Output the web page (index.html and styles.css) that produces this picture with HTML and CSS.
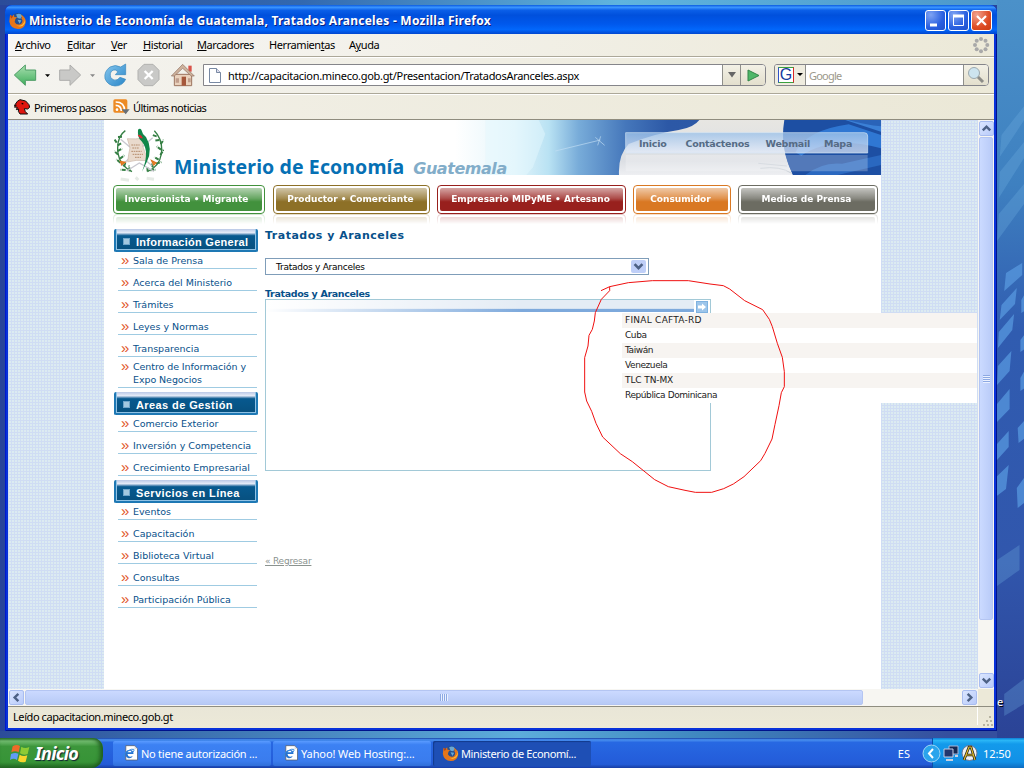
FILE: index.html
```html
<!DOCTYPE html>
<html lang="es">
<head>
<meta charset="utf-8">
<title>Ministerio de Economía de Guatemala, Tratados Aranceles</title>
<link rel="stylesheet" href="styles.css">
</head>
<body>
<svg class="defs" width="0" height="0">
  <defs>
    <linearGradient id="green" x1="0" y1="0" x2="0" y2="1"><stop offset="0" stop-color="#a9dfb0"/><stop offset="1" stop-color="#3fae5c"/></linearGradient>
    <linearGradient id="sky" x1="0" y1="0" x2="1" y2="1"><stop offset="0" stop-color="#86c7ee"/><stop offset="1" stop-color="#2a86c8"/></linearGradient>
    <symbol id="fox" viewBox="0 0 48 48"><circle cx="25" cy="22" r="19" fill="#244f91"/><path d="M20 7q12-6 18 4l-6 8-8-2zM24 22l11 1-5 10z" fill="#68a8d4"/><path d="M3 8l6 4 5-5 1 7 8 1-5 5-2 8q4 8 13 7 9-1 9-12l-4-7 3 1-3-9q15 8 13 22-4 18-22 18Q4 47 1 27z" fill="#e5761b"/><path d="M39 9q12 15-1 26-10 7-20 2 17 10 26-4 5-12-5-24z" fill="#ffc43b"/><path d="M3 9l3 9 6-5z" fill="#b94413"/></symbol>
    <symbol id="ie" viewBox="0 0 48 48"><path d="M10 2h26l9 9v34H10z" fill="#fff" stroke="#555" stroke-width="2"/><path d="M36 2v10h9" fill="#ddd"/><path d="M33 27H15q1 9 9 8l7-2q-4 8-13 7-10-3-9-15 2-11 14-11 10 1 10 13zm-18-5h12q-1-6-6-5-5 0-6 5z" fill="#2473d2"/><path d="M3 37q-5-7 11-18Q29 10 34 13q2 3-3 9" fill="none" stroke="#348ae0" stroke-width="3"/></symbol>
    <symbol id="chev" viewBox="0 0 14 14"><path d="M3 9l4-4 4 4" fill="none" stroke="#4d6185" stroke-width="2.6"/></symbol>
  </defs>
</svg>
<div class="desktop">
  <svg class="wallpaper" viewBox="0 0 30 738" width="30" height="738" preserveAspectRatio="none">
    <g fill="#5a9ce2" opacity=".7">
      <path d="M10 273l18-10v12l-20 16zM5 305l17-17-2 16-17 16zM2 332l17-18-2 16-16 18zM1 366l15-15-2 20-14 14zM0 404l14-15v20l-15 14zM-1 445l14-14v16l-14 14zM-2 478l15-13-3 24-12 8z"/>
      <path d="M27 300l5-8v18l-5 3zM26 340l5-6v15l-5 3zM26 378l5-8v18l-5 3zM23 428l8-8v18l-7 5zM22 488l8-10v25l-7 5z"/>
    </g>
    <g fill="#6fb0e0" opacity=".3"><path d="M5 135l26-30v14L3 157zM3 172l27-30v16L2 198zM2 214l28-30v20L0 241zM0 560l25-15v25L0 586zM8 694l22-15v25l-22 12z"/></g>
  </svg>
  <span class="desk-letter">e</span>
  <div class="window">
    <div class="titlebar">
      <svg width="17" height="17"><use href="#fox"/></svg>
      <span class="title t-title">Ministerio de Economía de Guatemala, Tratados Aranceles - Mozilla Firefox</span>
      <span class="wbtn"><svg width="19" height="19"><path d="M4 14h7" stroke="#fff" stroke-width="3"/></svg></span>
      <span class="wbtn"><svg width="19" height="19"><path d="M4.500 5.500h10v9h-10z" fill="none" stroke="#fff"/><path d="M4 5h11" stroke="#fff" stroke-width="3"/></svg></span>
      <span class="wbtn close"><svg width="19" height="19"><path d="M5 5l9 9M14 5l-9 9" stroke="#fff" stroke-width="2.200"/></svg></span>
    </div>
    <div class="menubar">
      <span><u>A</u>rchivo</span><span><u>E</u>ditar</span><span><u>V</u>er</span><span><u>H</u>istorial</span><span><u>M</u>arcadores</span><span>Herramien<u>t</u>as</span><span>A<u>y</u>uda</span>
      <svg class="throbber" width="18" height="18"><g fill="#a9a9a9"><circle cx="9" cy="3" r="2"/><circle cx="13.500" cy="4.700" r="2"/><circle cx="15.300" cy="9" r="2"/><circle cx="13.500" cy="13.300" r="2"/><circle cx="9" cy="15.300" r="2"/><circle cx="4.700" cy="13.300" r="2"/><circle cx="3" cy="9" r="2"/><circle cx="4.700" cy="4.700" r="2"/></g></svg>
    </div>
    <div class="navbar">
      <svg width="195" height="28" viewBox="0 0 585 84">
        <path d="M19 42l33-30v15h31v31H52v15z" fill="url(#green)" stroke="#4e9d67" stroke-width="3"/>
        <path d="M111 40h15l-7 8z"/><path d="M155 27h31V12l32 30-32 31V58h-31z" fill="#c9c9c7" stroke="#adadab" stroke-width="3"/><path d="M246 40h15l-7 8z" fill="#888"/>
        <path d="M338 18q-16-9-32 0-19 14-15 35 8 20 30 22 23 0 32-20l-17-6q-8 11-18 8-13-5-11-19 3-12 15-11l8 5-8 9h31V9z" fill="url(#sky)" stroke="#3686bd" stroke-width="2"/>
        <path d="M408 10h27l18 18v28l-18 18h-27l-18-18V28z" fill="#c9c9c7" stroke="#b1b1af" stroke-width="3"/><path d="M410 30l24 24m0-24l-24 24" stroke="#fff" stroke-width="7"/>
        <path d="M541 14h10v18h-10z" fill="#d9534a"/><path d="M499 40h52v34h-52z" fill="#ead2bd" stroke="#9c745e" stroke-width="3"/><path d="M490 45l34-35 35 35h-9l-26-23-25 23z" fill="#ceb29c" stroke="#8f6f60" stroke-width="2"/><path d="M521 47h13v27h-13z" fill="#a5573b"/><path d="M503 52h10v13h-10zM540 52h8v12h-8z" fill="#c19e8c"/>
      </svg>
      <div class="url">
        <svg width="12" height="15"><path d="M.500.500h7l4 4v10H.500z" fill="#fff" stroke="#7889a3"/><path d="M7.500.500v4h4" fill="#dde" stroke="#7889a3"/></svg>
        <span class="grow t-url">http://capacitacion.mineco.gob.gt/Presentacion/TratadosAranceles.aspx</span>
        <span class="cell drop"><svg width="8" height="6"><path d="M0 0h8L4 5.500z" fill="#666"/></svg></span>
        <span class="cell go"><svg width="13" height="13"><path d="M1 1l11 5.500L1 12z" fill="#4fb768" stroke="#338548"/></svg></span>
      </div>
      <div class="search">
        <span class="engine"><i>G</i><svg width="6" height="4"><path d="M0 0h6L3 3z"/></svg></span>
        <span class="query">Google</span>
        <span class="cell mag"><svg width="18" height="18"><path d="M10 10l6 6" stroke="#8d8d88" stroke-width="3"/><circle cx="7" cy="7" r="5.500" fill="#cde4ef" stroke="#9ca9ae"/></svg></span>
      </div>
    </div>
    <div class="bookmarks">
      <svg width="16" height="16" viewBox="0 0 48 48"><path d="M1 20L10 7l8-5 17 4 10 11 2 8-6 5-10-1 3 9 7 7H18l-5-8 1-7-7 2 3-7-9-1 6-5z" fill="#e0160f" stroke="#111" stroke-width="3"/><path d="M23 13l5 2" stroke="#000" stroke-width="4"/></svg>
      <span class="bm1">Primeros pasos</span>
      <svg width="17" height="16" viewBox="0 0 51 48"><rect x="1" y="1" width="42" height="40" rx="5" fill="#ed8b24"/><circle cx="12" cy="32" r="4" fill="#fff"/><path d="M8 19q16 0 17 17M8 9q27 0 27 27" fill="none" stroke="#fff" stroke-width="5"/><path d="M26 31h24L38 46z" fill="#687078"/></svg>
      <span class="bm2">Últimas noticias</span>
    </div>
    <div class="view">
      <div class="page">
        <div class="site">
          <div class="brand">
            <svg class="emblem" viewBox="42 18 150 174" width="50" height="58">
              <g fill="none" stroke="#357f44" stroke-width="4"><path d="M76 35q-28 20-22 68 6 37 42 55M163 35q27 28 21 70-6 38-42 53"/><path d="M54 54l14-1M53 79l12-7M50 71l-6-9M53 96l14-7M54 107l-11-11M60 119l13-10M61 131L49 121M72 143l5-15M77 153l-16-1M89 157l-2-17M170 52l-13-4M178 63l-13 2M182 76l9-14M183 92l-13-10M181 108l10-16M176 122l-13-8M168 134l16-5M159 145l-6-12M151 154l16-2M143 157l-1-13" stroke-dasharray="12 3" stroke-width="6"/></g>
              <path d="M62 61l94 79M63 140l95-84M80 156l38-24 44 25" fill="none" stroke="#c8c7cf" stroke-width="4"/>
              <path d="M82 59q26 2 48-2l-2 24q12 30 12 44-34-4-57 4 2-22 7-43z" fill="#e9dacd" stroke="#ccb7a9" stroke-width="2"/>
              <path d="M94 78h25M97 87h21M94 97h31M98 106h31M105 115h18" stroke="#b58c6c" stroke-width="3" stroke-dasharray="5 2"/>
              <path d="M114 32q6-6 10 0 2 12 14 22 22 36 2 76l-14 28q14-36 12-60-3-22-16-34-10-10-8-32z" fill="#11864a"/><path d="M113 47q5 12 16 11l-6-9z" fill="#df2730"/><path d="M61 127l14 3-10 7zM155 125l13 7-7 6z" fill="#f49330" stroke="#dd7520" stroke-width="4"/>
              <path d="M62 180l25 4m20-9l8 8m25-5l22 3" stroke="#e6ebe6" stroke-width="9"/>
            </svg>
            <div class="name"><span class="min">Ministerio de Economía</span><span class="guate">Guatemala</span></div>
            <svg class="banner" viewBox="-171 15 1278 165" width="426" height="55" preserveAspectRatio="none">
              <defs><linearGradient id="ban"><stop offset="0" stop-color="#fff"/><stop offset=".14" stop-color="#e4f5fb"/><stop offset=".22" stop-color="#b9e2f3"/><stop offset=".29" stop-color="#78acd9"/><stop offset=".4" stop-color="#4577bb"/><stop offset=".5" stop-color="#2c58a6"/><stop offset="1" stop-color="#2d5cab"/></linearGradient><linearGradient id="fab" x1="0" y1="0" x2="0" y2="1"><stop offset="0" stop-color="#e7e6e2"/><stop offset=".75" stop-color="#dcdfe4"/><stop offset="1" stop-color="#eeeff2"/></linearGradient><linearGradient id="pan" x1="0" y1="0" x2="0" y2="1"><stop offset="0" stop-color="#9bc1e9" stop-opacity=".8"/><stop offset="1" stop-color="#e5ecfa" stop-opacity=".72"/></linearGradient></defs>
              <path d="M-171 15h1278v165H-171z" fill="url(#ban)"/>
              <path d="M-80 180V15H80l20 42-37 100-20 23z" fill="#e4f7fd" opacity=".5"/>
              <path d="M562 15H820Q800 94 843 180H321Q318 120 350 87 430 55 500 45 545 38 562 15z" fill="url(#fab)"/>
              <path d="M817 15H1107V180H843Q803 97 817 15z" fill="#1d4fa3"/>
              <path d="M850 112Q885 45 1010 28L1107 60V100Q960 60 868 122z" fill="#2f77d3"/>
              <path d="M905 15H1000L1107 50V15z" fill="#3b80d6"/><path d="M1008 15h99v19q-45-4-99-19z" fill="#2a63b8"/>
              <path d="M880 180q50-40 110-34l117-26v30l-130 30z" fill="#2a68c0"/>
              <path d="M745 160q60-8 94 15m-100-30l86 8" fill="none" stroke="#cbd1d8" stroke-width="3"/>
              <path d="M341 53h716q10 0 10 10v51H341z" fill="url(#pan)" stroke="#d1e4f5" stroke-width="2"/><path d="M341 120h726v49H341z" fill="#fff" opacity=".24"/>
              <path d="M130 108l135-33m-15-8l28 24m-12-27l-9 27" fill="none" stroke="#c3def5" stroke-width="3" opacity=".65"/>
            </svg>
            <nav class="topnav"><span>Inicio</span><span>Contáctenos</span><span>Webmail</span><span>Mapa</span></nav>
          </div>
          <div class="tabs">
            <div class="tab g"><b>Inversionista • Migrante</b></div><div class="tab o"><b>Productor • Comerciante</b></div><div class="tab r"><b>Empresario MIPyME • Artesano</b></div><div class="tab n"><b>Consumidor</b></div><div class="tab y"><b>Medios de Prensa</b></div>
          </div>
          <div class="cols">
            <aside class="side">
              <h2><i></i><span class="s1">Información General</span></h2>
              <p class="first">Sala de Prensa</p><p>Acerca del Ministerio</p><p>Trámites</p><p>Leyes y Normas</p><p>Transparencia</p><p class="two">Centro de Información y<br>Expo Negocios</p>
              <h2><i></i><span class="s2">Areas de Gestión</span></h2>
              <p class="first">Comercio Exterior</p><p>Inversión y Competencia</p><p>Crecimiento Empresarial</p>
              <h2><i></i><span class="s3">Servicios en Línea</span></h2>
              <p class="first">Eventos</p><p>Capacitación</p><p>Biblioteca Virtual</p><p>Consultas</p><p>Participación Pública</p>
            </aside>
            <main class="main">
              <h1>Tratados y Aranceles</h1>
              <div class="select"><span>Tratados y Aranceles</span><i><svg width="13" height="11" viewBox="0 0 14 14"><path d="M2 4l5 5 5-5" fill="none" stroke="#4d6185" stroke-width="3.400"/></svg></i></div>
              <h3>Tratados y Aranceles</h3>
              <div class="panel">
                <div class="phead"><div class="shade"></div><i><svg width="12" height="11"><path d="M1 3.500h4V1.500l4 3.500-4 3.500v-2H1z" fill="#fff"/></svg></i></div>
              </div>
              <a class="back">« Regresar</a>
            </main>
          </div>
        </div>
        <div class="popup"><div>FINAL CAFTA-RD</div><div>Cuba</div><div>Taiwán</div><div>Venezuela</div><div>TLC TN-MX</div><div>República Dominicana</div></div>
        <svg class="mark" viewBox="0 0 1362 720" width="454" height="240"><path d="M93 62L119 50V62L94 88 76 128 73 153 67 178 57 196 54 228 44 263V366L50 393 65 424 78 460 98 501 151 551 187 575 254 629 295 650 345 661 376 667H425L461 656 490 642 522 620 572 572 585 550 606 507 615 463 627 407 634 368 643 350V305L637 262 622 220 607 170 598 148 578 119 524 92 479 57 460 47 420 42 355 32H247L175 38 119 50" fill="none" stroke="#f01010" stroke-width="3"/></svg>
      </div>
      <div class="vscroll"><span class="sb"><svg width="13" height="13"><use href="#chev"/></svg></span><span class="thumb"><em></em></span><span class="grow"></span><span class="sb"><svg width="13" height="13" viewBox="0 0 13 13"><use href="#chev" width="13" height="13" transform="rotate(180 6.500 6.500)"/></svg></span></div>
    </div>
    <div class="hscroll"><span class="sb"><svg width="13" height="13" viewBox="0 0 13 13"><use href="#chev" width="13" height="13" transform="rotate(-90 6.500 6.500)"/></svg></span><span class="thumb"><em></em></span><span class="grow"></span><span class="sb"><svg width="13" height="13" viewBox="0 0 13 13"><use href="#chev" width="13" height="13" transform="rotate(90 6.500 6.500)"/></svg></span></div>
    <div class="status"><span class="t-status">Leído capacitacion.mineco.gob.gt</span><svg width="17" height="20"><path d="M.500 0v18" stroke="#fff"/><path d="M12 10h2M9 14h2m2 0h2M6 18h2m2 0h2m2 0h2" stroke="#b8b4a2" stroke-width="2"/></svg></div>
  </div>
  <div class="taskbar">
    <div class="start"><svg width="21" height="20" viewBox="0 0 63 60"><path d="M8 10q12-8 22-1l-4 19q-11-6-22 0z" fill="#ed6b28"/><path d="M34 11q10 7 24 1l-5 21q-12 5-23-2z" fill="#8dcb35"/><path d="M3 33q12-6 22-1l-4 19q-10-7-21 0z" fill="#609cf5"/><path d="M29 35q11 7 23 2l-5 19q-12 5-23-3z" fill="#f8d52c"/></svg><b>Inicio</b></div>
    <div class="task"><svg width="17" height="16"><use href="#ie"/></svg><span class="k1">No tiene autorización ...</span></div>
    <div class="task"><svg width="17" height="16"><use href="#ie"/></svg><span class="k2">Yahoo! Web Hosting:...</span></div>
    <div class="task on"><svg width="17" height="16"><use href="#fox"/></svg><span class="k3">Ministerio de Economí...</span></div>
    <span class="grow"></span><span class="lang">ES</span>
    <div class="tray"><svg class="collapse" width="19" height="19"><circle cx="9.500" cy="9.500" r="8.500" fill="#2ba4ec" stroke="#a1d7f4"/><path d="M11 5L7 9.500l4 4.500" fill="none" stroke="#fff" stroke-width="2"/></svg>
      <svg width="16" height="17"><path d="M6 1h9v8H6z" fill="#152953" stroke="#a9b6d8"/><path d="M1 4h9v8H1z" fill="#22366e" stroke="#c3cce4"/><path d="M3 15h7m2-4h3" stroke="#cad1df" stroke-width="2"/></svg>
      <svg width="17" height="17"><circle cx="8.500" cy="8" r="7.500" fill="#eef0f4" stroke="#6a7893"/><path d="M3 15L8 2h2l4 13M5 10h7" fill="none" stroke="#1a1a18" stroke-width="2.600"/><path d="M3 15L8 2h2l4 13M5 10h7" fill="none" stroke="#e2bd2b" stroke-width="1.200"/></svg>
      <span>12:50</span></div>
  </div>
</div>
</body>
</html>
```

FILE: styles.css
```css
* { box-sizing: border-box; }
body { margin: 0; width: 1024px; height: 768px; overflow: hidden; font: 11px "Noto Sans", "Open Sans", sans-serif; color: #000; }
svg { display: block; flex: none; }
.defs { position: absolute; }
.desktop { position: relative; width: 1024px; height: 768px; display: flex; flex-direction: column; gap: 7px; padding-top: 5px; white-space: nowrap;
  background: linear-gradient(#4b91c9, #3e80c0 25%, #305cb0 45%, #3157ad 75%, #2b4396) 997px 0 / 27px 738px no-repeat,
  linear-gradient(90deg, #2c4c99, #3b6eae 18%, #5daddb 52%, #4088c0 70%, #354f9e 95%) 0 731px / 997px 8px no-repeat,
  linear-gradient(90deg, #2b4c9a, #3268af 30%, #5fb4de 62%, #4c97cb) 0 0 / 997px 5px no-repeat, #28449a; }
.wallpaper { position: absolute; left: 997px; top: 0; width: 27px; }
.desk-letter { position: absolute; left: 997px; top: 694px; color: #fff; text-shadow: 1px 1px #000; }
.grow { flex: 1; min-width: 0; }

.window { position: relative; width: 992px; height: 726px; margin-left: 5px; padding: 0 3px 3px; display: flex; flex-direction: column; background: #0831d9; border-radius: 7px 7px 0 0; box-shadow: inset 1px 0 #0019cf, inset -1px -1px #00138c; }
.titlebar { height: 29px; flex: none; margin: 0 -3px; padding: 2px 5px 0 4px; display: flex; align-items: center; gap: 2px; border-radius: 7px 7px 0 0; background: linear-gradient(#0a5be0, #3b95ff 8%, #0b5fe8 18%, #0050dc 35%, #0058ec 65%, #0267fb 85%, #0146cf); }
.title { flex: 1; margin-left: 1px; font: bold 12px "Noto Sans"; color: #fff; text-shadow: 1px 1px #0a1f80; }
.t-title { letter-spacing: .24px; }
.wbtn { width: 21px; height: 21px; border: 1px solid #fff; border-radius: 3px; background: radial-gradient(circle at 25% 20%, #7fa3f3, #2a60e0 60%, #2051cb); }
.close { background: radial-gradient(circle at 25% 20%, #f0a28e, #de4c24 60%, #c93c12); }
.menubar { height: 23px; flex: none; display: flex; align-items: center; padding: 0 4px 1px 7px; letter-spacing: -.42px; background: linear-gradient(90deg, #f7f6f5, #ece9d8); border-bottom: 1px solid #aca899; }
.menubar span:nth-child(1) { width: 52px; }
.menubar span:nth-child(2) { width: 44px; }
.menubar span:nth-child(3) { width: 32px; }
.menubar span:nth-child(4) { width: 54px; }
.menubar span:nth-child(5) { width: 72px; }
.menubar span:nth-child(6) { width: 80px; }
.throbber { margin-left: auto; }
.navbar { height: 37px; flex: none; display: flex; align-items: center; padding: 0 5px 1px 0; background: linear-gradient(90deg, #f4f3ef, #ece9d8); border-top: 1px solid #fff; border-bottom: 1px solid #aca899; }
.navbar > svg { margin-top: -1px; }
.url, .search { height: 22px; border: 1px solid #85858a; background: #fff; display: flex; align-items: stretch; border-radius: 0 4px 4px 0; overflow: hidden; }
.url { width: 563px; padding-left: 5px; }
.url > svg { margin-top: 3px; margin-right: 7px; }
.url > span, .query { line-height: 21px; }
.t-url { letter-spacing: -.3px; }
.cell { display: flex; align-items: center; justify-content: center; border-left: 1px solid #8f8f8a; background: linear-gradient(#f3f1e6, #e3dfcd); }
.drop { width: 18px; } .go { width: 25px; } .mag { width: 25px; }
.search { width: 215px; margin-left: 8px; border-radius: 3px 4px 4px 3px; }
.engine { width: 31px; display: flex; align-items: center; gap: 3px; padding-left: 3px; border-right: 1px solid #8f8f8a; background: #efecdf; }
.engine i { width: 16px; height: 16px; border: 1px solid #3ba13e; border-right-color: #d82929; border-left-color: #3154c8; background: #fff; color: #153c9e; font: 16px/14px "Liberation Sans"; text-align: center; }
.query { flex: 1; padding-left: 3px; color: #9c998c; letter-spacing: -.8px; }
.bookmarks { height: 26px; flex: none; display: flex; align-items: center; padding-left: 6px; letter-spacing: -.55px; border-top: 1px solid #fff; border-bottom: 1px solid #8f8c7e; background: linear-gradient(90deg, #f2f0e8, #ebe8d7); }
.bm1 { margin-left: 4px; width: 79px; }
.bm2 { margin-left: 3px; }

.view { display: flex; height: 569px; flex: none; }
.page { position: relative; width: 970px; padding-left: 96px; background: repeating-linear-gradient(90deg, #cfddf4 0 1px, transparent 1px 3px), repeating-linear-gradient(#d0dcf3 0 1px, #dcebf1 1px 3px); overflow: hidden; }
.site { width: 777px; height: 569px; background: #fff; }
.brand { position: relative; height: 65px; display: flex; }
.emblem { margin: 5px 0 0 10px; }
.name { margin: 33px 0 0 10px; display: flex; align-items: baseline; gap: 9px; height: 28px; position: relative; z-index: 1; }
.min { color: #0670b4; font: bold 19.500px/27px "Noto Sans"; letter-spacing: .1px; }
.guate { color: #82adc9; font: italic bold 16px/27px "DejaVu Sans"; letter-spacing: -.45px; }
.banner { position: absolute; right: 0; top: 0; }
.topnav { position: absolute; left: 535px; top: 17px; display: flex; gap: 17px; font: bold 9.500px/14px "DejaVu Sans"; letter-spacing: -.25px; color: #556b85; }
.topnav span:nth-child(1) { margin-right: 2px; }
.topnav span:nth-child(2) { margin-right: -1px; }
.topnav span:nth-child(3) { margin-right: -3px; }
.tabs { display: flex; gap: 8px; padding-left: 9px; height: 38px; }
.tab { height: 29px; border: 1px solid var(--c); border-radius: 4px; padding: 2px; -webkit-box-reflect: below 0 linear-gradient(transparent 65%, rgba(0,0,0,.25)); }
.tab b { display: block; height: 23px; border-radius: 2px; background: linear-gradient(#fff9, #fff3 45%, #fff0 60%), var(--c); color: #fff; text-align: center; font: bold 9px/23px "DejaVu Sans"; }
.g { --c: #42913d; width: 152px; } .o { --c: #8d7027; width: 157px; } .r { --c: #98201d; width: 189px; margin-left: -1px; } .n { --c: #d97823; width: 98px; margin-left: -1px; } .y { --c: #6c6c62; width: 140px; margin-left: -1px; }
.g b { padding-right: 5px; }
.o b, .r b { padding-right: 2px; }
.n b, .y b { padding-right: 3px; }
.cols { display: flex; padding: 6px 0 0 10px; gap: 7px; }
.side { width: 144px; }
.side h2 { margin: 4px 0 0; height: 23px; display: flex; align-items: center; gap: 6px; padding: 4px 0 0 7px; border: 2px solid #1e78b4; border-top: 0; background: linear-gradient(#b9c8e6, #e6ecf8 18%, #7ea5c8 24%, #07598f 32%, #07507f); box-shadow: inset 1px -1px #8fc1e4, inset -1px 0 #8fc1e4; border-radius: 2px; color: #fff; font: bold 11px "Liberation Sans"; letter-spacing: .4px; }
.side h2:first-child { margin-top: 0; letter-spacing: .28px; }
.side h2 i { width: 7px; height: 7px; background: #a3c8e0; border: 1px solid #6fa4ca; flex: none; }
.side p { margin: 0 1px 0 4px; height: 22px; padding: 7px 0 0 15px; border-bottom: 1px solid #9fcbe2; color: #07508a; font: 9.500px/13px "DejaVu Sans"; position: relative; }
.side p::before { content: "»"; position: absolute; left: 3px; color: #df5527; font: 15px/11px "Liberation Sans"; }
.side p.first { height: 17px; padding-top: 2px; }
.side p.two { height: 31px; padding-top: 3px; letter-spacing: -.08px; }
.main { width: 446px; display: flex; flex-direction: column; align-items: flex-start; color: #07508a; }
h1 { margin: 0; font: bold 11px/14px "DejaVu Sans"; letter-spacing: .5px; }
.select { margin-top: 15px; width: 384px; height: 17px; border: 1px solid #7f9db9; display: flex; align-items: center; justify-content: space-between; padding: 0 2px 0 10px; color: #000; font: 9px "DejaVu Sans"; letter-spacing: -.25px; }
.select i { width: 15px; height: 13px; border-radius: 2px; background: #bfcff8; padding: 1px; }
h3 { margin: 13px 0 0; font: bold 9.500px/11px "DejaVu Sans"; letter-spacing: -.35px; }
.panel { width: 446px; height: 172px; border: 1px solid #a2c9d7; }
.phead { display: flex; height: 13px; padding-right: 2px; gap: 2px; }
.shade { flex: 1; margin-bottom: 1px; background: linear-gradient(90deg, #fff, #fff0 60%), linear-gradient(#e4ecf5 70%, #7da9dc 76%); }
.phead i { width: 12px; height: 12px; margin-top: 1px; border: 1px solid #7fb2e0; background: #9dc5ea; overflow: hidden; }
.back { margin-top: 84px; color: #8b938f; font: 9px/13px "DejaVu Sans"; letter-spacing: -.2px; text-decoration: underline; }
.popup { position: absolute; left: 614px; top: 193px; width: 355px; font: 9px/14px "DejaVu Sans"; letter-spacing: -.42px; color: #222; }
.popup div { height: 15px; padding-left: 3px; background: #fff; }
.popup div:nth-child(odd) { background: #f7f4f1; }
.popup div:nth-child(1) { letter-spacing: .25px; }
.popup div:nth-child(5) { letter-spacing: -.1px; }
.mark { position: absolute; left: 562px; top: 150px; }

.vscroll, .hscroll { display: flex; background: #f7f6f2; padding: 1px; }
.vscroll { width: 16px; flex-direction: column; }
.hscroll { height: 17px; flex: none; padding-right: 17px; box-shadow: inset -16px 0 #ece9d8; }
.sb { width: 15px; height: 15px; flex: none; border: 1px solid #a9bdf0; border-radius: 2px; background: linear-gradient(135deg, #dbe6ff, #b8cafa); }
.thumb { display: flex; align-items: center; justify-content: center; border: 1px solid #b4c5f2; border-radius: 2px; }
.vscroll .thumb { height: 483px; margin-top: 1px; background: linear-gradient(90deg, #cbdaff, #b9cbf8); }
.hscroll .thumb { width: 838px; margin-left: 1px; background: linear-gradient(#cbd9ff, #b7caf6); }
.thumb em { width: 7px; height: 8px; background: repeating-linear-gradient(#8da9e3 0 1px, #eaf0ff 1px 2px); }
.hscroll em { height: 7px; width: 8px; background: repeating-linear-gradient(90deg, #8da9e3 0 1px, #eaf0ff 1px 2px); }
.status { height: 22px; flex: none; display: flex; align-items: center; justify-content: space-between; padding: 0 0 2px 5px; border-top: 1px solid #8f8d80; background: linear-gradient(#e9e6d7, #ece9d8); }
.t-status { letter-spacing: -.42px; }

.taskbar { height: 30px; flex: none; display: flex; background: linear-gradient(#1941a5, #4a91ef 6%, #2768e2 15%, #245edb 70%, #235bd6 88%, #173da3); color: #fff; }
.start { width: 103px; margin-right: 10px; display: flex; align-items: center; gap: 4px; padding: 0 0 1px 10px; border-radius: 0 10px 12px 0; background: linear-gradient(#327c31, #73bd71 10%, #3c963b 28%, #379437 80%, #256b25); box-shadow: inset -3px 0 4px #1f5c1f; }
.start b { font: italic bold 18px "Noto Sans"; text-shadow: 1px 1px 1px #123; letter-spacing: -.8px; }
.task { width: 158px; height: 25px; margin: 3px 2px 0 0; display: flex; align-items: center; gap: 2px; padding: 0 0 1px 9px; border-radius: 2px; background: linear-gradient(#5a9bff, #3c81f3 15%, #3a7cee 80%, #306fd8); }
.task.on { background: #1e4fb5; box-shadow: inset 1px 1px 1px #123a8c; }
.k1 { letter-spacing: -.25px; }
.k2 { letter-spacing: -.1px; }
.k3 { letter-spacing: -.38px; }
.lang { align-self: center; margin-right: 22px; }
.tray { width: 92px; display: flex; align-items: center; gap: 2px; letter-spacing: -.1px; background: linear-gradient(#0d7fd6, #2ab6f6 8%, #139aeb 20%, #1290e6 80%, #0e6cc0); border-left: 1px solid #0a4fa8; }
.tray .collapse { margin-left: -11px; }
.tray span { margin-left: 3px; }
```
